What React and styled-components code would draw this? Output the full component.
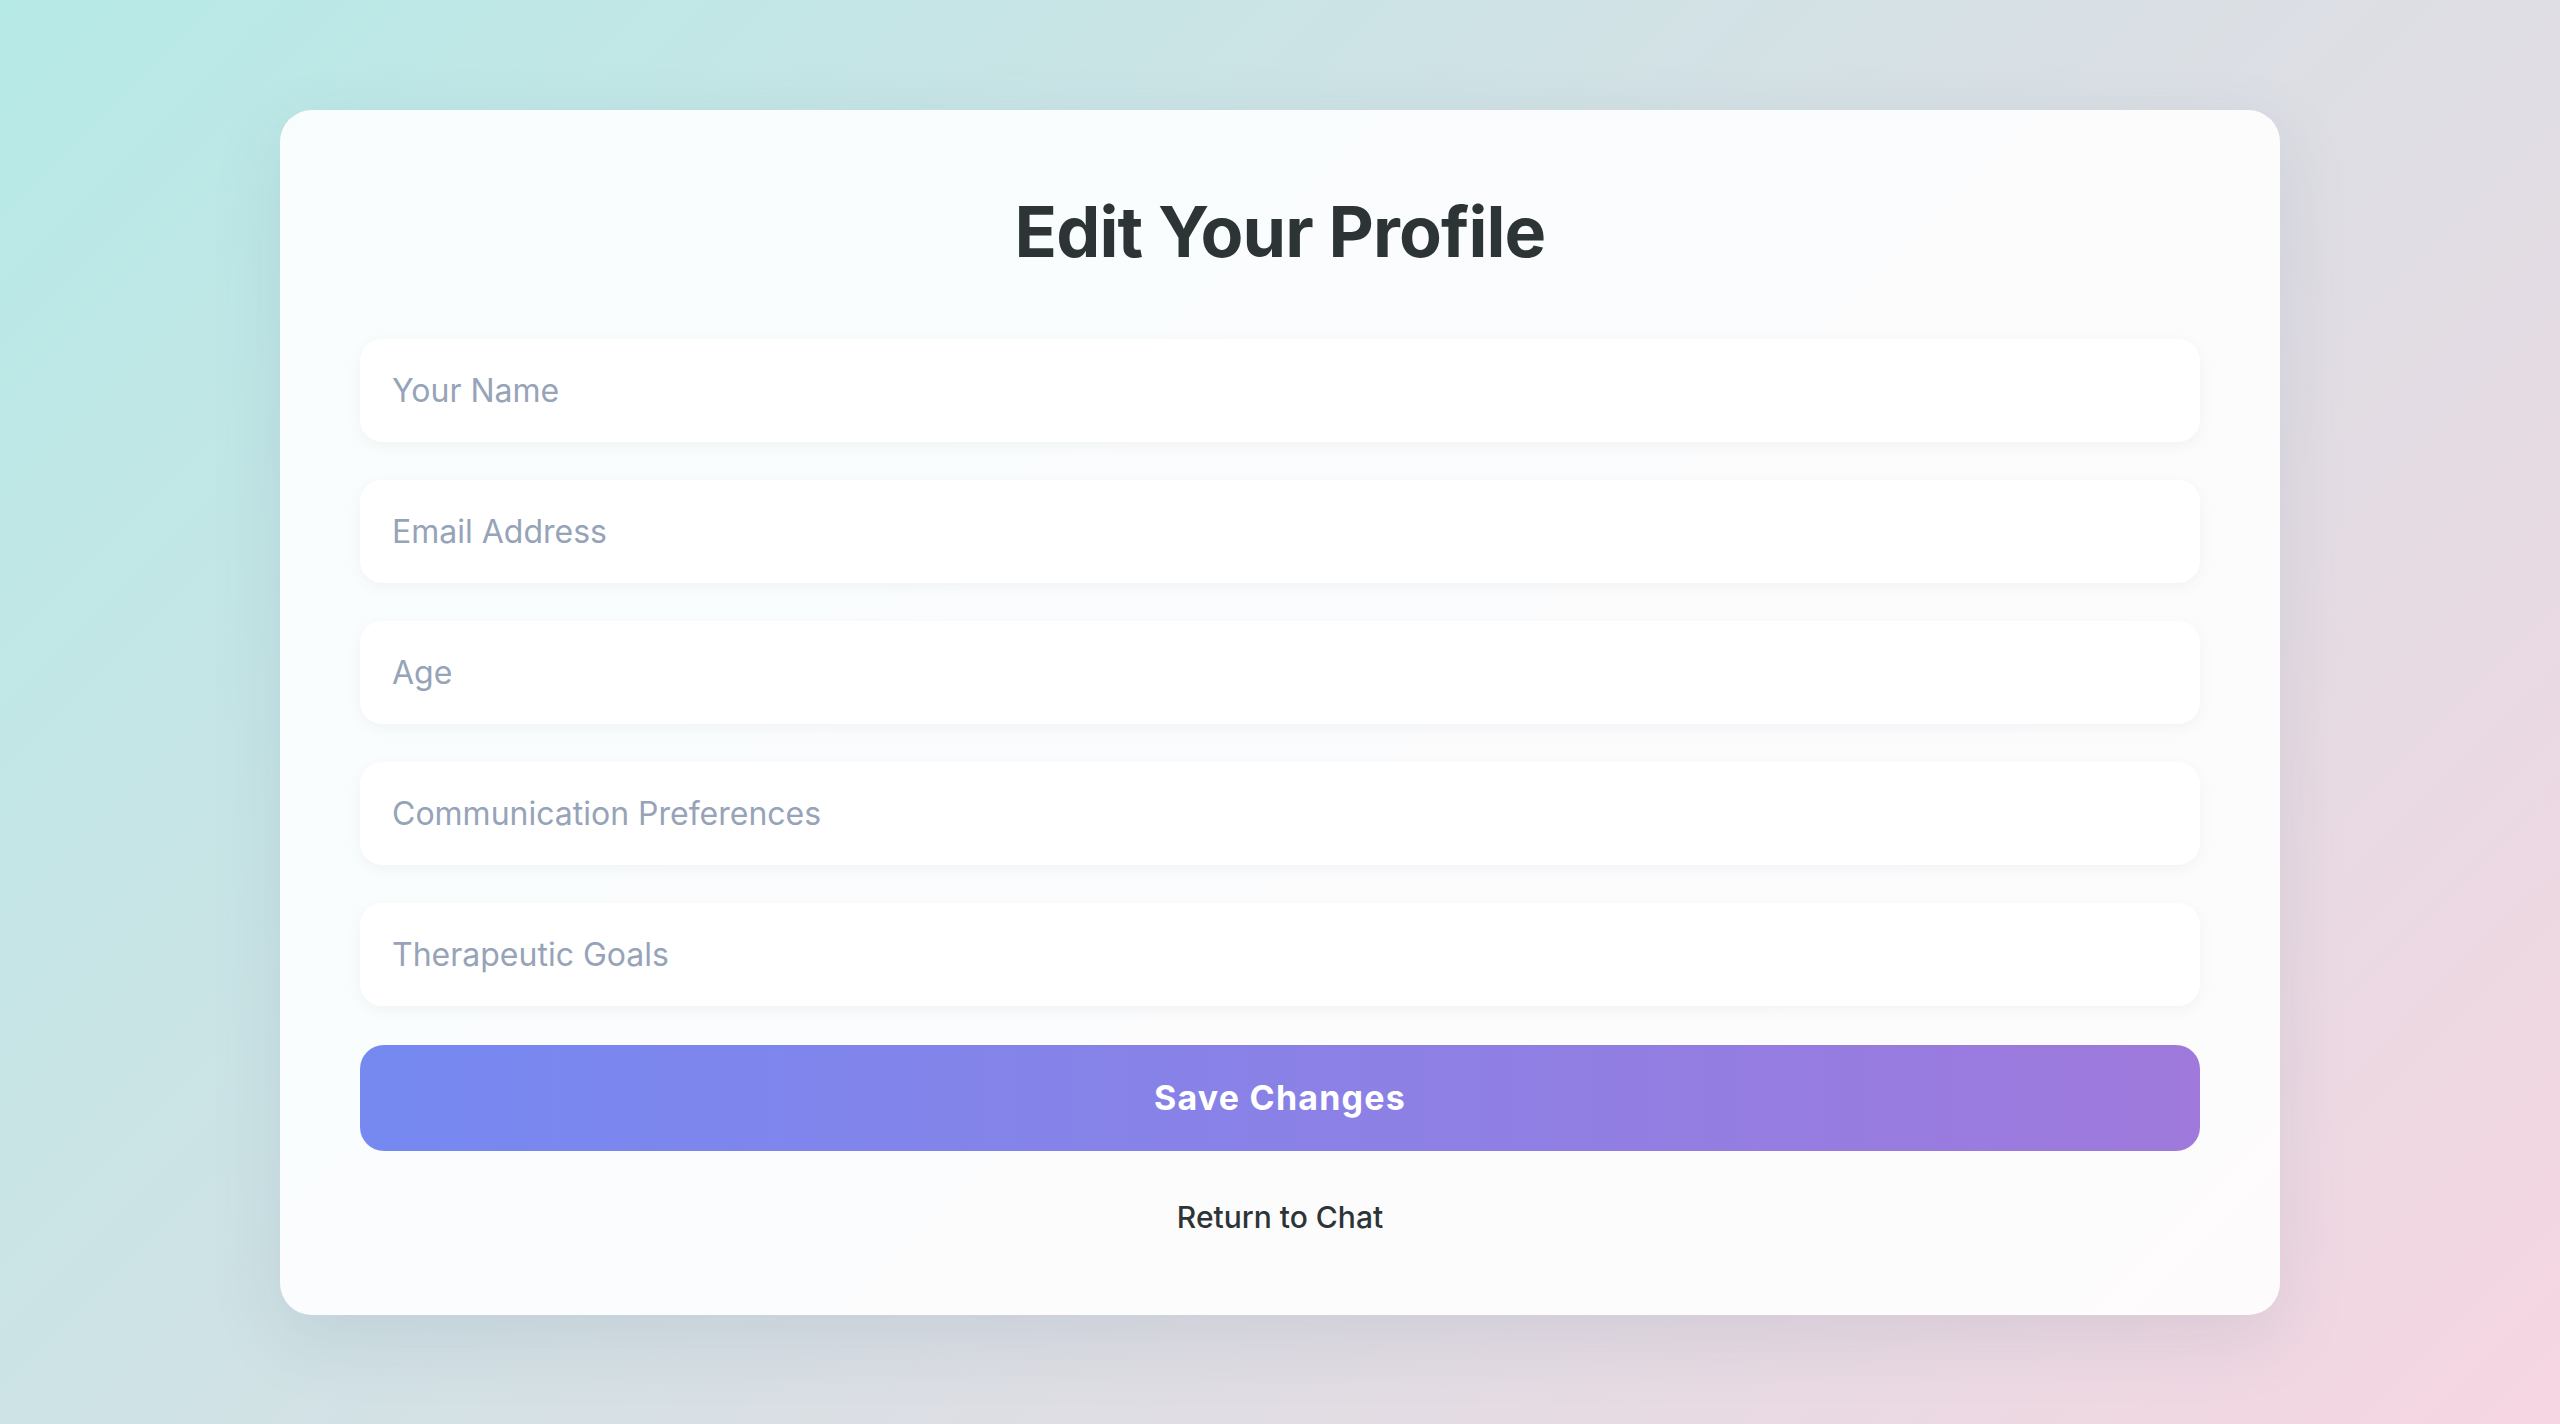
import React, { useState } from "react";
import styled, { createGlobalStyle } from "styled-components";

const GlobalStyle = createGlobalStyle`
  * { box-sizing: border-box; }
  html, body { margin: 0; padding: 0; }
  body {
    font-family: Inter, "Noto Sans", "Liberation Sans", sans-serif;
    background: linear-gradient(135deg, #b6eae7 0%, #f6d6e2 100%);
    min-height: 100vh;
  }
`;

const Page = styled.div`
  min-height: 100vh;
  display: flex;
  align-items: center;
  justify-content: center;
`;

const Card = styled.div`
  width: 2000px;
  padding: 80px;
  background: rgba(255, 255, 255, 0.9);
  border-radius: 32px;
  box-shadow: 0 24px 70px rgba(90, 110, 140, 0.14);
  display: flex;
  flex-direction: column;
`;

const Title = styled.h1`
  margin: 0 0 65px;
  text-align: center;
  font-size: 70px;
  line-height: 1.2;
  font-weight: 700;
  color: #2d3436;
  letter-spacing: -0.9px;
`;

const Form = styled.form`
  display: flex;
  flex-direction: column;
  gap: 38px;
`;

const Field = styled.input`
  height: 103px;
  padding: 0 32px;
  border: none;
  border-radius: 22px;
  background: #ffffff;
  box-shadow: 0 4px 14px rgba(60, 80, 110, 0.06);
  font-family: inherit;
  font-size: 32px;
  color: #2d3436;
  outline: none;

  &::placeholder {
    color: #96a3b8;
  }
`;

const SaveButton = styled.button`
  margin-top: 1px;
  height: 106px;
  border: none;
  border-radius: 24px;
  background: linear-gradient(90deg, #7589f1 0%, #9f79dc 100%);
  color: #ffffff;
  font-family: inherit;
  font-size: 34px;
  font-weight: 700;
  letter-spacing: 1.2px;
  cursor: pointer;
`;

const ReturnLink = styled.a`
  margin-top: 48px;
  align-self: center;
  font-size: 30px;
  line-height: 1.2;
  font-weight: 500;
  color: #2d3436;
  text-decoration: none;
  cursor: pointer;
`;

const fields = [
  { name: "name", placeholder: "Your Name", type: "text" },
  { name: "email", placeholder: "Email Address", type: "email" },
  { name: "age", placeholder: "Age", type: "number" },
  { name: "prefs", placeholder: "Communication Preferences", type: "text" },
  { name: "goals", placeholder: "Therapeutic Goals", type: "text" },
];

const App = () => {
  const [values, setValues] = useState({});

  const handleChange = (e) =>
    setValues({ ...values, [e.target.name]: e.target.value });

  return (
    <>
      <GlobalStyle />
      <Page>
        <Card>
          <Title>Edit Your Profile</Title>
          <Form onSubmit={(e) => e.preventDefault()}>
            {fields.map((f) => (
              <Field
                key={f.name}
                name={f.name}
                type={f.type}
                placeholder={f.placeholder}
                value={values[f.name] || ""}
                onChange={handleChange}
              />
            ))}
            <SaveButton type="submit">Save Changes</SaveButton>
          </Form>
          <ReturnLink>Return to Chat</ReturnLink>
        </Card>
      </Page>
    </>
  );
};

export default App;
